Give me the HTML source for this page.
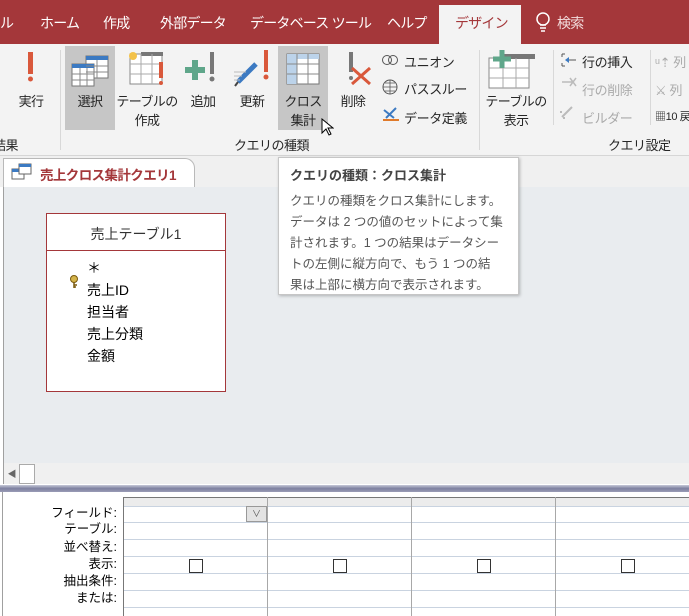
<!DOCTYPE html>
<html><head><meta charset="utf-8"><style>
*{margin:0;padding:0;box-sizing:border-box}
body{width:689px;height:616px;overflow:hidden;position:relative;background:#fff;font-family:"Liberation Sans","Noto Sans CJK JP",sans-serif;color:#262626}
.a{position:absolute}
.tab{position:absolute;top:13px;color:#fff;font-size:14px;letter-spacing:-0.8px;white-space:nowrap}
.lbl{position:absolute;font-size:13px;letter-spacing:-0.6px;text-align:center;line-height:19px;white-space:nowrap}
.sm{position:absolute;font-size:13px;letter-spacing:-0.4px;white-space:nowrap}
.gl{position:absolute;top:135px;font-size:13px;letter-spacing:-0.5px;white-space:nowrap}
.sep{position:absolute;top:50px;width:1px;height:100px;background:#d8d8d8}
.rl{position:absolute;right:572px;font-size:12.5px;white-space:nowrap;color:#000;line-height:14px}
.hr{position:absolute;left:124px;right:0;height:1px;background:#c9d3e0}
.vr{position:absolute;top:497px;bottom:0;width:1px;background:#a8a8a8}
.cb{position:absolute;top:559px;width:14px;height:14px;border:1px solid #333;background:#fff}
</style></head><body>
<div class="a" style="left:0;top:0;width:689px;height:44px;background:#a4373a"></div>
<div class="tab" style="left:0">ル</div>
<div class="tab" style="left:40px">ホーム</div>
<div class="tab" style="left:103px">作成</div>
<div class="tab" style="left:160px">外部データ</div>
<div class="tab" style="left:250px">データベース ツール</div>
<div class="tab" style="left:387px">ヘルプ</div>
<div class="a" style="left:439px;top:5px;width:82px;height:39px;background:#f3f3f3"></div>
<div class="tab" style="left:455px;color:#a4373a">デザイン</div>
<svg class="a" style="left:535px;top:12px" width="16" height="22"><circle cx="8" cy="7" r="6" fill="none" stroke="#fff" stroke-width="1.5"/><path d="M5 13h6M5 16h6M6 19h4" stroke="#fff" stroke-width="1.5"/></svg>
<div class="tab" style="left:557px;color:#f2dcdc">検索</div>
<div class="a" style="left:0;top:44px;width:689px;height:111px;background:#f3f3f3"></div>
<div class="a" style="left:0;top:155px;width:689px;height:1px;background:#d6d6d6"></div>
<div class="a" style="left:65px;top:46px;width:50px;height:84px;background:#c6c6c6"></div>
<div class="a" style="left:278px;top:46px;width:50px;height:84px;background:#c6c6c6"></div>
<svg class="a" style="left:0;top:46px" width="689" height="60">
<rect x="28" y="6" width="5" height="22" fill="#d9583b"/><circle cx="30.5" cy="33" r="2.5" fill="#d9583b"/>
<rect x="86" y="10" width="22" height="22" fill="#fff" stroke="#777"/><rect x="86" y="10" width="22" height="4" fill="#3c7ac2"/>
<rect x="72" y="18" width="22" height="22" fill="#fff" stroke="#777"/><rect x="72" y="18" width="22" height="4" fill="#3c7ac2"/>
<path d="M72 28h22M72 34h22M80 22v18M87 22v18M86 20h22M86 26h22M97 14v18" stroke="#888" stroke-width="1"/>
<rect x="130" y="8" width="32" height="30" fill="#fff" stroke="#888"/><rect x="141" y="6" width="22" height="4" fill="#777"/>
<path d="M130 18h32M130 28h32M141 8v30M152 8v30" stroke="#aaa"/>
<circle cx="133" cy="10" r="4" fill="#f3c24a"/>
<rect x="159" y="16" width="4" height="16" fill="#d9583b"/><circle cx="161" cy="37" r="2" fill="#d9583b"/>
<path d="M195 14v20M185 24h20" stroke="#5fa68a" stroke-width="6"/>
<rect x="210" y="6" width="4" height="22" fill="#777"/><circle cx="212" cy="33" r="2.5" fill="#777"/>
<path d="M238 36l18-18" stroke="#3c7ac2" stroke-width="5"/><path d="M235 40l3-4" stroke="#444" stroke-width="2"/>
<path d="M234 26h12M234 30h8M234 34h6" stroke="#bbb"/>
<rect x="264" y="4" width="4" height="22" fill="#d9583b"/><circle cx="266" cy="31" r="2.5" fill="#d9583b"/>
<rect x="287" y="8" width="32" height="30" fill="#fff" stroke="#777"/><rect x="287" y="8" width="10" height="30" fill="#bcd3ea"/><rect x="287" y="8" width="32" height="5" fill="#bcd3ea"/>
<path d="M287 18h32M287 28h32M297 8v30M308 8v30" stroke="#888"/>
<rect x="349" y="6" width="4" height="20" fill="#777"/><circle cx="351" cy="32" r="2" fill="#777"/>
<path d="M352 22l18 16M370 22l-18 16" stroke="#d9583b" stroke-width="3"/>
<rect x="489" y="12" width="40" height="30" fill="#fff" stroke="#888"/><rect x="503" y="8" width="32" height="5" fill="#777"/>
<path d="M489 22h40M489 32h40M503 12v30M516 12v30" stroke="#aaa"/>
<path d="M502 4v18M493 13h18" stroke="#5fa68a" stroke-width="5"/>
</svg>
<div class="lbl" style="left:10px;top:92px;width:42px">実行</div>
<div class="lbl" style="left:65px;top:92px;width:50px">選択</div>
<div class="lbl" style="left:113px;top:92px;width:68px">テーブルの<br>作成</div>
<div class="lbl" style="left:182px;top:92px;width:42px">追加</div>
<div class="lbl" style="left:231px;top:92px;width:42px">更新</div>
<div class="lbl" style="left:278px;top:92px;width:50px">クロス<br>集計</div>
<div class="lbl" style="left:333px;top:92px;width:40px">削除</div>
<div class="lbl" style="left:482px;top:92px;width:68px">テーブルの<br>表示</div>
<svg class="a" style="left:320px;top:118px" width="14" height="20"><path d="M2 1v14l4-4 3 6 2-1-3-6h5z" fill="#fff" stroke="#000"/></svg>
<svg class="a" style="left:380px;top:52px" width="20" height="75"><circle cx="7" cy="8" r="4.5" fill="none" stroke="#555"/><circle cx="13" cy="8" r="4.5" fill="none" stroke="#555"/><circle cx="10" cy="35" r="7" fill="none" stroke="#555"/><path d="M3 35h14M10 28v14M5 31h10M5 39h10" stroke="#555" stroke-width=".8"/><path d="M4 58l10 8M6 66l10-10" stroke="#3c7ac2" stroke-width="2"/><path d="M3 68h16" stroke="#e07a2a" stroke-width="2"/></svg>
<div class="sm" style="left:404px;top:52px">ユニオン</div>
<div class="sm" style="left:404px;top:79px">パススルー</div>
<div class="sm" style="left:404px;top:108px">データ定義</div>
<svg class="a" style="left:558px;top:52px" width="20" height="70"><path d="M4 2h3M4 14h3M4 2v3M4 11v3M8 8h10" stroke="#555"/><path d="M7 8l4-3v6z" fill="#3c7ac2"/><path d="M4 30h10M12 26l6 8M18 26l-6 8" stroke="#bbb" stroke-width="1.5"/><path d="M4 65l10-10M2 60h2M5 66h2" stroke="#bbb" stroke-width="2"/></svg>
<div class="sm" style="left:582px;top:52px">行の挿入</div>
<div class="sm" style="left:582px;top:80px;color:#aaa">行の削除</div>
<div class="sm" style="left:582px;top:108px;color:#aaa">ビルダー</div>
<div class="sm" style="left:655px;top:52px;color:#aaa">ᵘ⇡ 列</div>
<div class="sm" style="left:655px;top:80px;color:#aaa">⚔ 列</div>
<div class="sm" style="left:655px;top:108px;font-size:11px">▦10 戻</div>
<div class="sep" style="left:60px"></div>
<div class="sep" style="left:479px"></div>
<div class="sep" style="left:553px;height:75px"></div>
<div class="sep" style="left:650px;height:75px"></div>
<div class="gl" style="left:-7px">結果</div>
<div class="gl" style="left:234px">クエリの種類</div>
<div class="gl" style="left:608px">クエリ設定</div>
<div class="a" style="left:0;top:156px;width:689px;height:31px;background:#f0f0f0"></div>
<div class="a" style="left:3px;top:158px;width:192px;height:29px;background:#fff;border:1px solid #b9b9b9;border-bottom:none;border-radius:0 10px 0 0"></div>
<svg class="a" style="left:11px;top:163px" width="22" height="18"><rect x="1" y="6" width="12" height="10" fill="#fff" stroke="#666"/><rect x="1" y="6" width="12" height="3" fill="#3c7ac2"/><rect x="8" y="1" width="12" height="10" fill="#fff" stroke="#666"/><rect x="8" y="1" width="12" height="3" fill="#3c7ac2"/></svg>
<div class="a" style="left:40px;top:164px;font-size:13.5px;letter-spacing:-0.6px;font-weight:bold;color:#a4373a">売上クロス集計クエリ1</div>
<div class="a" style="left:3px;top:187px;width:686px;height:276px;background:#e9ecef;border-left:1px solid #a0a0a0"></div>
<div class="a" style="left:46px;top:213px;width:180px;height:179px;background:#fff;border:1px solid #a4373a"></div>
<div class="a" style="left:46px;top:250px;width:180px;height:1px;background:#a4373a"></div>
<div class="a" style="left:46px;top:224px;width:180px;text-align:center;font-size:14px;color:#333">売上テーブル1</div>
<div class="a" style="left:87px;top:257px;font-size:14px;color:#000;line-height:22px">＊<br>売上ID<br>担当者<br>売上分類<br>金額</div>
<svg class="a" style="left:69px;top:275px" width="10" height="14"><circle cx="5" cy="4" r="3.5" fill="#d4b44a" stroke="#7a5a10"/><path d="M5 7v6M5 10h3M5 12h2" stroke="#7a5a10" stroke-width="1.5"/></svg>
<div class="a" style="left:3px;top:463px;width:686px;height:21px;background:#f0f0f0;border-left:1px solid #a0a0a0"></div>
<div class="a" style="left:5px;top:465px;width:14px;height:18px;color:#666;font-size:9px;line-height:18px;text-align:center">◀</div>
<div class="a" style="left:19px;top:464px;width:16px;height:20px;border:1px solid #aaa;background:#fff"></div>
<div class="a" style="left:0;top:485px;width:689px;height:7px;background:linear-gradient(#c7c9d8,#7d80a0,#9a9cb6)"></div>
<div class="a" style="left:0;top:492px;width:3px;height:124px;background:#fff;border-right:1px solid #a0a0a0"></div>
<div class="a" style="left:123px;top:497px;width:566px;height:1px;background:#777"></div>
<div class="a" style="left:123px;top:497px;width:1px;height:119px;background:#777"></div>
<div class="a" style="left:124px;top:498px;width:565px;height:8px;background:#ececec"></div>
<div class="hr" style="top:506px"></div>
<div class="hr" style="top:522px"></div>
<div class="hr" style="top:539px"></div>
<div class="hr" style="top:556px"></div>
<div class="hr" style="top:573px"></div>
<div class="hr" style="top:590px"></div>
<div class="hr" style="top:607px"></div>
<div class="vr" style="left:267px"></div>
<div class="vr" style="left:411px"></div>
<div class="vr" style="left:555px"></div>
<div class="a" style="left:246px;top:506px;width:21px;height:16px;background:#e3e3e3;border:1px solid #999;font-size:9px;text-align:center;line-height:14px;color:#555">∨</div>
<div class="cb" style="left:189px"></div>
<div class="cb" style="left:333px"></div>
<div class="cb" style="left:477px"></div>
<div class="cb" style="left:621px"></div>
<div class="rl" style="top:506px">フィールド:</div>
<div class="rl" style="top:522px">テーブル:</div>
<div class="rl" style="top:540px">並べ替え:</div>
<div class="rl" style="top:557px">表示:</div>
<div class="rl" style="top:574px">抽出条件:</div>
<div class="rl" style="top:591px">または:</div>
<div class="a" style="left:278px;top:157px;width:241px;height:138px;background:#fff;border:1px solid #c6c6c6;box-shadow:1px 1px 3px rgba(0,0,0,.25)"></div>
<div class="a" style="left:290px;top:165px;font-size:13px;font-weight:bold;color:#444">クエリの種類：クロス集計</div>
<div class="a" style="left:290px;top:191px;width:228px;font-size:12.5px;line-height:21px;color:#555">クエリの種類をクロス集計にします。<br>データは 2 つの値のセットによって集<br>計されます。1 つの結果はデータシー<br>トの左側に縦方向で、もう 1 つの結<br>果は上部に横方向で表示されます。</div>
</body></html>
